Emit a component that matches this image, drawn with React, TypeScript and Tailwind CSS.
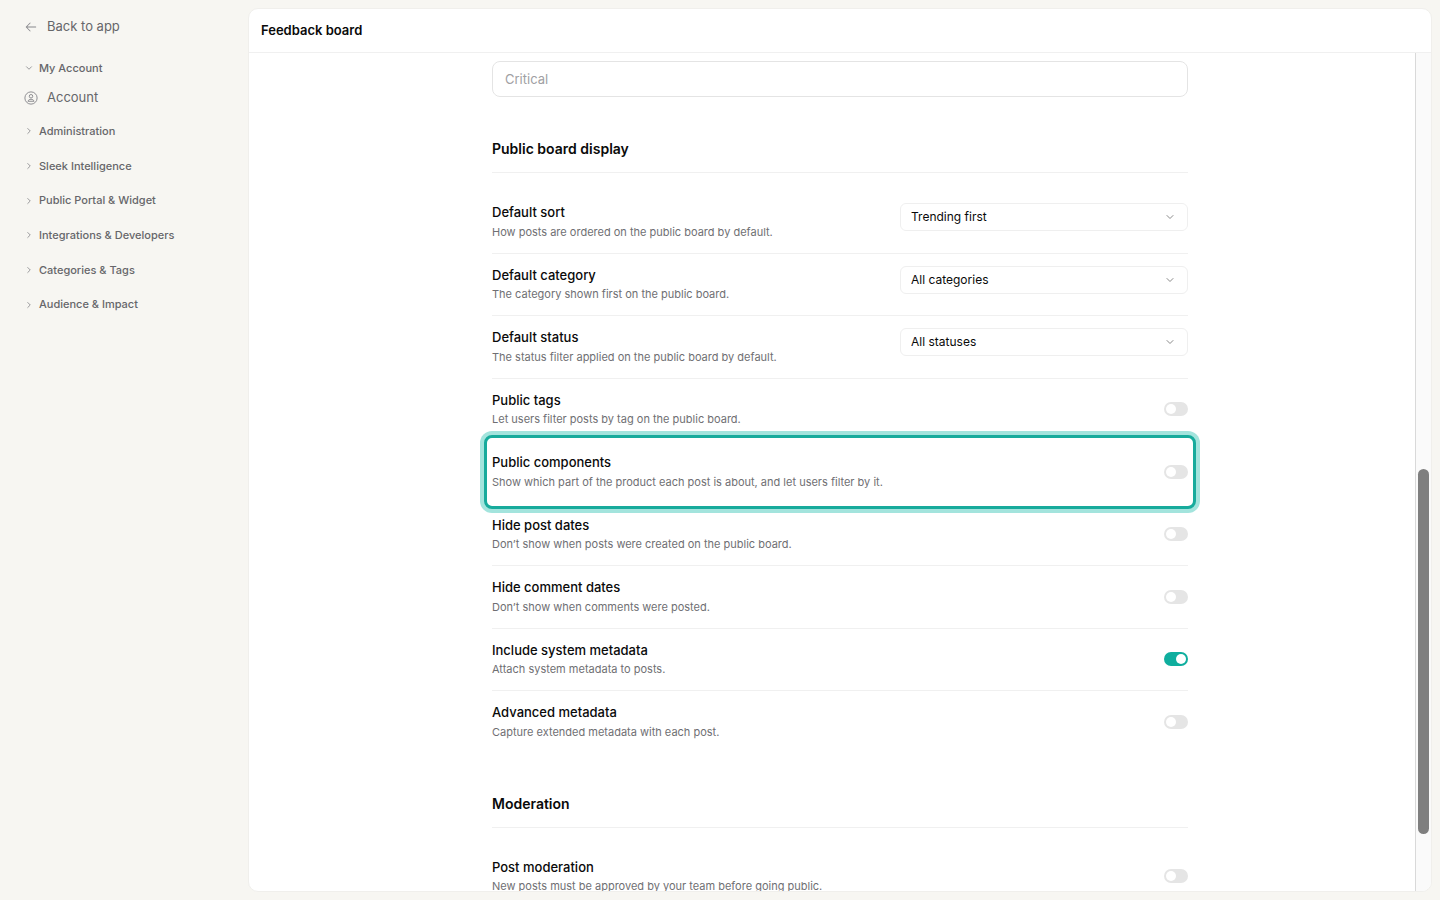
import { useState } from "react";
import { ChevronDown, ChevronRight } from "lucide-react";
import { PiArrowLeft } from "react-icons/pi";

const sections = [
  "Administration",
  "Sleek Intelligence",
  "Public Portal & Widget",
  "Integrations & Developers",
  "Categories & Tags",
  "Audience & Impact",
];

type Setting = {
  id: string;
  title: string;
  description: string;
  option?: string;
  on?: boolean;
  highlighted?: boolean;
};

const displaySettings: Setting[] = [
  { id: "sort", title: "Default sort", description: "How posts are ordered on the public board by default.", option: "Trending first" },
  { id: "category", title: "Default category", description: "The category shown first on the public board.", option: "All categories" },
  { id: "status", title: "Default status", description: "The status filter applied on the public board by default.", option: "All statuses" },
  { id: "tags", title: "Public tags", description: "Let users filter posts by tag on the public board." },
  {
    id: "components",
    title: "Public components",
    description: "Show which part of the product each post is about, and let users filter by it.",
    highlighted: true,
  },
  { id: "post-dates", title: "Hide post dates", description: "Don’t show when posts were created on the public board." },
  { id: "comment-dates", title: "Hide comment dates", description: "Don’t show when comments were posted." },
  { id: "system-metadata", title: "Include system metadata", description: "Attach system metadata to posts.", on: true },
  { id: "advanced-metadata", title: "Advanced metadata", description: "Capture extended metadata with each post." },
];

const moderationSettings: Setting[] = [
  { id: "moderation", title: "Post moderation", description: "New posts must be approved by your team before going public." },
];

function AccountIcon() {
  return (
    <svg viewBox="0 0 24 24" className="size-3.5 text-[#88888c]" fill="none" stroke="currentColor" strokeWidth={1.6}>
      <circle cx="12" cy="12" r="10.5" />
      <circle cx="12" cy="9" r="3" />
      <path d="M6.8 17.6c.6-2.2 2.6-3.4 5.2-3.4s4.600 1.200 5.200 3.400z" strokeLinejoin="round" />
    </svg>
  );
}

function Toggle({ id, on = false }: { id: string; on?: boolean }) {
  const [checked, setChecked] = useState(on);
  return (
    <input
      id={id}
      type="checkbox"
      role="switch"
      checked={checked}
      onChange={(e) => setChecked(e.target.checked)}
      className="flex h-3.5 w-6 shrink-0 cursor-pointer appearance-none items-center rounded-full bg-[#e5e5e5] px-0.5 before:size-2.5 before:rounded-full before:bg-white checked:justify-end checked:bg-[#0fae9e]"
    />
  );
}

function Picker({ id, option }: { id: string; option: string }) {
  return (
    <div className="relative w-72 shrink-0 self-start">
      <select
        id={id}
        className="h-7 w-full appearance-none rounded-md border border-[#efefef] bg-white px-2.5 text-xs text-[#0a0a0a]"
      >
        <option>{option}</option>
      </select>
      <ChevronDown className="pointer-events-none absolute top-2 right-3 size-3 text-[#8a8a8a]" strokeWidth={2} />
    </div>
  );
}

function SettingRow({ setting }: { setting: Setting }) {
  const { id, title, description, option, on, highlighted } = setting;
  return (
    <div className="relative border-b border-[#f0f0f0] py-3 last:border-b-transparent">
      {highlighted && (
        <div className="absolute -inset-x-2 -inset-y-1.5 rounded-lg border-3 border-[#17ab9c] bg-white ring-4 ring-[#a3e4dd]" />
      )}
      <div className="relative flex items-center justify-between">
        <div>
          <label htmlFor={id} className="block text-[13px] leading-normal font-medium text-[#0a0a0a]">
            {title}
          </label>
          <p className="py-px text-[11px] leading-4 text-[#6f6f73]">{description}</p>
        </div>
        {option ? <Picker id={id} option={option} /> : <Toggle id={id} on={on} />}
      </div>
    </div>
  );
}

function SettingGroup({ title, settings }: { title: string; settings: Setting[] }) {
  return (
    <section>
      <h2 className="border-b border-[#f0f0f0] pb-[13px] text-sm leading-5 font-semibold text-[#0a0a0a]">{title}</h2>
      <div className="pt-[18px]">
        {settings.map((s) => (
          <SettingRow key={s.id} setting={s} />
        ))}
      </div>
    </section>
  );
}

function Sidebar() {
  return (
    <nav className="w-60 shrink-0 px-6 pt-[9px] text-[#66666a]">
      <a href="#app" className="flex h-5 items-center gap-[9px] text-[13px]">
        <PiArrowLeft className="size-3.5 text-[#88888c]" />
        Back to app
      </a>
      <button className="mt-[23px] flex h-4 items-center gap-[5px] text-[11px] font-medium">
        <ChevronDown className="size-2.5 text-[#88888c]" />
        My Account
      </button>
      <a href="#account" className="mt-3 flex h-5 items-center gap-[9px] text-[13px]">
        <AccountIcon />
        Account
      </a>
      <ul className="mt-1.5 grid h-52 grid-rows-6">
        {sections.map((name) => (
          <li key={name} className="flex">
            <button className="flex items-center gap-[5px] text-[11px] font-medium">
              <ChevronRight className="size-2.5 text-[#88888c]" />
              {name}
            </button>
          </li>
        ))}
      </ul>
    </nav>
  );
}

export default function App() {
  return (
    <div className="flex h-screen overflow-hidden bg-[#f7f6f2] p-2 pl-0 font-['Inter',sans-serif]">
      <Sidebar />
      <main className="ml-2 flex min-w-0 flex-1 flex-col overflow-hidden rounded-[10px] border border-[#f0efec] bg-white">
        <header className="flex h-11 shrink-0 items-center border-b border-[#f0f0f0] px-3">
          <h1 className="text-[13px] font-semibold text-[#0a0a0a]">Feedback board</h1>
        </header>
        <div className="relative min-h-0 flex-1 overflow-hidden">
          <div className="mx-auto flex max-w-[696px] flex-col pt-2">
            <input
              aria-label="Critical label"
              placeholder="Critical"
              className="h-9 w-full rounded-lg border border-[#e4e4e4] px-3 text-[13px] placeholder:text-[#a0a0a3]"
            />
            <div className="mt-[42px] flex flex-col gap-10">
              <SettingGroup title="Public board display" settings={displaySettings} />
              <SettingGroup title="Moderation" settings={moderationSettings} />
            </div>
          </div>
          <div className="absolute inset-y-0 right-0 w-4 border-l border-[#d9d9d9] bg-[#fafafa] px-0.5">
            <div className="mt-[416px] h-[365px] w-[11px] rounded-full bg-[#7f7f7f]" />
          </div>
        </div>
      </main>
    </div>
  );
}
